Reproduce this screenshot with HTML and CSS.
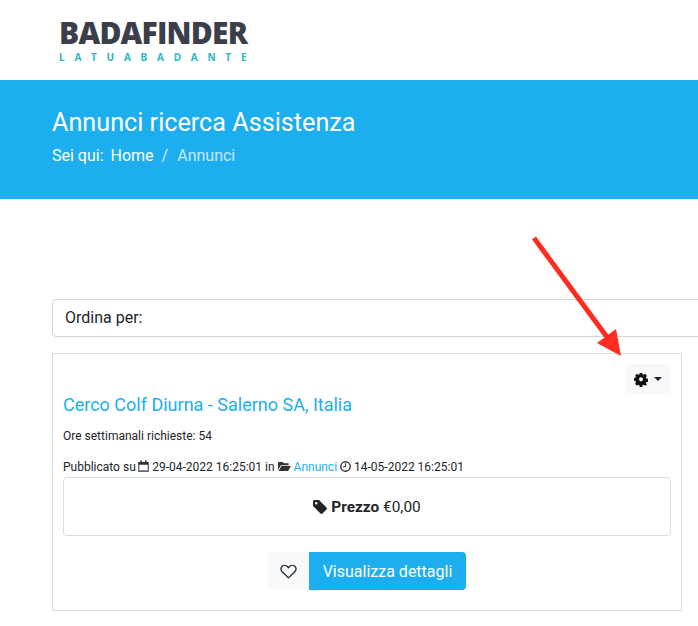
FILE: index.html
```html
<!DOCTYPE html>
<html lang="en">
  <head>
    <meta charset="UTF-8" />
    <meta name="viewport" content="width=device-width, initial-scale=1.0" />
    <title>Annunci ricerca Assistenza</title>
    <link rel="stylesheet" href="styles.css">
  </head>
  <body>
    <header class="site-header">
      <a href="#" class="logo">
        <span class="logo-name">BADAFINDER</span>
        <span class="logo-sub">LATUABADANTE</span>
      </a>
    </header>

    <section class="hero">
      <h1>Annunci ricerca Assistenza</h1>
      <div class="breadcrumb">
        <span>Sei qui:</span>
        <a href="#" class="crumb">Home</a>
        <span class="crumb-sep">/</span>
        <span class="crumb-current">Annunci</span>
      </div>
    </section>

    <main class="content">
      <div class="sort-box">Ordina per:</div>

      <article class="card">
        <div class="card-tools">
          <button class="gear-btn" aria-label="Opzioni">
            <svg class="icon-gear" viewBox="0 0 24 24" width="14" height="14">
              <path fill="#111" fill-rule="evenodd" d="M9.500 0h5l.7 3.300 1.900.8L20 2.300 23.500 5.800l-1.800 2.900.8 1.900 3.300.7v5l-3.300.7-.8 1.900 1.800 2.900L20 23.700l-2.900-1.800-1.900.8-.7 3.300h-5l-.7-3.300-1.900-.8L4 23.700.5 20.200l1.800-2.900-.8-1.900L-1.800 14.700v-5l3.300-.7.800-1.900L.5 5.800 4 2.300l2.900 1.800 1.900-.8zM12 8.200a3.800 3.800 0 1 0 0 7.600 3.800 3.800 0 0 0 0-7.600z" transform="translate(1.500 -.800) scale(.875 .96)"/>
            </svg>
            <span class="caret"></span>
          </button>
        </div>

        <h2 class="card-title"><a href="#">Cerco Colf Diurna - Salerno SA, Italia</a></h2>
        <p class="card-hours">Ore settimanali richieste: 54</p>

        <p class="card-meta">
          Pubblicato su
          <svg class="icon-meta icon-calendar" viewBox="0 0 14 14" width="11" height="12" preserveAspectRatio="none">
            <path fill="none" stroke="#333" stroke-width="1.300" d="M1 3h12v10H1z"/>
            <path fill="#333" d="M1 3h12v2.500H1zM3 .5h2v3H3zM9 .5h2v3H9z"/>
          </svg>
          29-04-2022 16:25:01 in
          <svg class="icon-meta" viewBox="0 0 14 12" width="13" height="11">
            <path fill="#333" d="M0 1h5l1.500 1.500H11.500V4.500H3L0 10zM3.600 5.500H14L11 11H.6z"/>
          </svg>
          <a href="#">Annunci</a>
          <svg class="icon-meta" viewBox="0 0 14 14" width="11" height="11">
            <circle cx="7" cy="7" r="6" fill="none" stroke="#333" stroke-width="1.800"/>
            <path fill="none" stroke="#333" stroke-width="1.400" d="M7 3v4.300H4"/>
          </svg>
          14-05-2022 16:25:01
        </p>

        <div class="price-box">
          <svg class="icon-tag" viewBox="0 0 14 14" width="14" height="14">
            <path fill="#212529" fill-rule="evenodd" d="M0 1.500C0 .7.700 0 1.500 0H6l7.500 7.500c.6.600.6 1.500 0 2l-4 4c-.6.600-1.500.6-2 0L0 6zM3.200 2a1.200 1.200 0 1 0 0 2.400 1.200 1.200 0 0 0 0-2.400z"/>
          </svg>
          <span><strong>Prezzo</strong> €0,00</span>
        </div>

        <div class="card-actions">
          <button class="btn-fav" aria-label="Preferiti">
            <svg viewBox="0 0 18 16" width="17" height="15">
              <path fill="none" stroke="#212529" stroke-width="1.400" stroke-linejoin="round" d="M9 14.800 2.300 8.300C.5 6.500.6 3.900 2.200 2.400c1.700-1.500 4.200-1.200 5.600.3L9 4l1.200-1.300c1.400-1.500 3.900-1.800 5.600-.3 1.600 1.500 1.700 4.100-.1 5.900z"/>
            </svg>
          </button>
          <button class="btn-details">Visualizza dettagli</button>
        </div>
      </article>

      <svg class="arrow" viewBox="0 0 100 130" width="100" height="130">
        <path fill="none" stroke="#ff2d20" stroke-width="5" d="M2 2 75 101"/>
        <path fill="#ff2d20" d="M89 120 65 107 84 93z"/>
      </svg>
    </main>
  </body>
</html>
```

FILE: styles.css
```css
html,
body {
  margin: 0;
  padding: 0;
  height: 626px;
  overflow: hidden;
}
body {
  font-family: Roboto, Arial, sans-serif;
  font-size: 16px;
  color: #212529;
  background-color: #fff;
}
a {
  color: #1daeef;
  text-decoration: none;
}
.site-header {
  height: 80px;
  box-sizing: border-box;
  padding: 17px 0 0 59px;
}
.logo {
  display: flex;
  flex-direction: column;
  align-items: flex-start;
}
.logo-name {
  font-family: "Open Sans", Arial, sans-serif;
  font-weight: 800;
  font-size: 30px;
  line-height: 32px;
  letter-spacing: -0.8px;
  color: #3a3f4a;
}
.logo-sub {
  margin-top: 1px;
  font-family: "Open Sans", Arial, sans-serif;
  font-weight: 700;
  font-size: 10px;
  line-height: 14px;
  letter-spacing: 9.75px;
  color: #2ab7c2;
}
.hero {
  height: 119px;
  box-sizing: border-box;
  padding: 27px 52px 0;
  background-color: #1daeef;
  color: #fff;
}
.hero h1 {
  margin: 0;
  font-size: 25.200px;
  font-weight: 400;
  line-height: 31px;
}
.breadcrumb {
  margin-top: 8px;
  line-height: 20px;
  display: flex;
}
.crumb {
  color: #fff;
  margin-left: 7px;
}
.crumb-sep {
  margin: 0 9px 0 8px;
  opacity: 0.8;
}
.crumb-current {
  opacity: 0.75;
}
.content {
  position: relative;
  padding: 100px 16px 0 52px;
}
.sort-box {
  width: 700px;
  height: 38px;
  box-sizing: border-box;
  padding: 0 12px;
  line-height: 36px;
  border: 1px solid #ced4da;
  border-radius: 4px;
}
.card {
  margin-top: 16px;
  width: 630px;
  height: 258px;
  box-sizing: border-box;
  padding: 10px;
  border: 1px solid #dcdcdc;
}
.card-tools {
  display: flex;
  justify-content: flex-end;
}
.gear-btn {
  width: 46px;
  height: 31px;
  padding: 0;
  border: 0;
  border-radius: 4px;
  background-color: #f8f9fa;
  display: flex;
  align-items: center;
  justify-content: center;
  gap: 6px;
}
.caret {
  border-top: 4px solid #212529;
  border-left: 4.500px solid transparent;
  border-right: 4.500px solid transparent;
  margin-bottom: 2px;
}
.card-title {
  margin: -1px 0 0;
  font-size: 18px;
  font-weight: 400;
  line-height: 22px;
}
.card-hours {
  margin: 12px 0 0;
  font-size: 12px;
  line-height: 17px;
}
.card-meta {
  margin: 14px 0 0;
  font-size: 12px;
  line-height: 17px;
}
.icon-meta {
  vertical-align: -1px;
}
.icon-calendar {
  margin-left: -0.5px;
}
.price-box {
  height: 59px;
  box-sizing: border-box;
  margin-top: 1px;
  border: 1px solid #dcdcdc;
  border-radius: 4px;
  display: flex;
  align-items: center;
  justify-content: center;
  gap: 4px;
  font-size: 15.400px;
}
.card-actions {
  margin-top: 16px;
  display: flex;
  justify-content: center;
}
.btn-fav {
  width: 41px;
  height: 38px;
  padding: 0;
  border: 0;
  border-radius: 4px 0 0 4px;
  background-color: #f8f9fa;
  display: flex;
  align-items: center;
  justify-content: center;
}
.btn-details {
  height: 38px;
  padding: 0 13.500px;
  border: 0;
  border-radius: 0 4px 4px 0;
  background-color: #1daeef;
  color: #fff;
  font-family: Roboto, Arial, sans-serif;
  font-size: 16px;
}
.arrow {
  position: absolute;
  left: 532px;
  top: 37px;
}
```
